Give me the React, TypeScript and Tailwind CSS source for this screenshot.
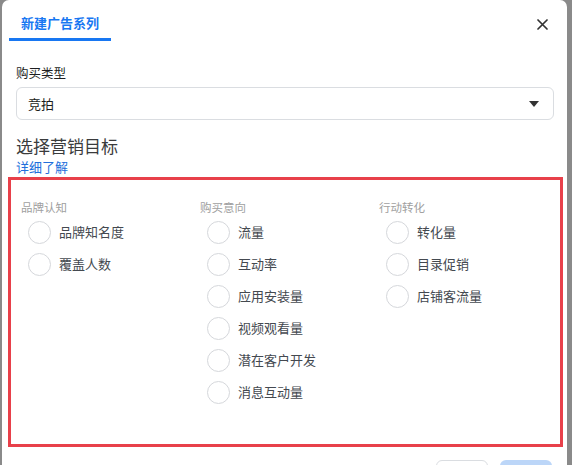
import React, { useState } from "react";

interface Group {
  title: string;
  options: string[];
}

const groups: Group[] = [
  { title: "品牌认知", options: ["品牌知名度", "覆盖人数"] },
  {
    title: "购买意向",
    options: ["流量", "互动率", "应用安装量", "视频观看量", "潜在客户开发", "消息互动量"],
  },
  { title: "行动转化", options: ["转化量", "目录促销", "店铺客流量"] },
];

export default function App() {
  const [picked, setPicked] = useState<string | null>(null);

  return (
    <div className="h-[465px] w-[572px] overflow-hidden bg-[#8a8a8a] pl-[2px] pr-[5px] font-['Noto_Sans_CJK_SC','Noto_Sans',sans-serif]">
      <div className="h-full rounded-t-[7px] bg-white">
        {/* 顶部标签 */}
        <div className="flex h-[41px] items-start justify-between">
          <div className="ml-[7px] flex h-full w-[102px] flex-col items-center">
            <div className="pt-[16px] text-[13px] leading-[13px] font-semibold text-[#1877f2]">
              新建广告系列
            </div>
            <div className="flex-1" />
            <div className="h-[3px] w-full bg-[#1877f2]" />
          </div>
          <button className="mr-[19px] mt-[19px] text-[#333]">
            <svg width="11" height="11" viewBox="0 0 11 11">
              <path
                d="M1 1 L10 10 M10 1 L1 10"
                stroke="currentColor"
                strokeWidth="1.7"
                strokeLinecap="round"
              />
            </svg>
          </button>
        </div>

        {/* 购买类型 */}
        <div className="px-[14px] pr-[13px]">
          <div className="mt-[25px] text-[12.5px] leading-[13px] text-[#1c1e21]">购买类型</div>
          <div className="mt-[8px] flex h-[33px] items-center justify-between rounded-[6px] border border-[#dadde1] pl-[11px] pr-[14px]">
            <span className="text-[13px] text-[#1c1e21]">竞拍</span>
            <svg width="10" height="6" viewBox="0 0 10 6">
              <path d="M0 0 L10 0 L5 6 Z" fill="#333" />
            </svg>
          </div>

          <div className="mt-[15px] text-[17px] leading-[21px] text-[#3a3b3c]">选择营销目标</div>
          <div className="mt-[3px] text-[13px] leading-[15px] text-[#216fdb]">详细了解</div>
        </div>

        {/* 营销目标 */}
        <div className="ml-[6px] mr-[4px] mt-[3px] h-[270px] border-[3px] border-[#e8404a] pl-[10px] pt-[20px]">
          <div className="flex">
            {groups.map((g) => (
              <div key={g.title} className="w-[179px]">
                <div className="text-[11.5px] leading-[14px] text-[#a0a0a0]">{g.title}</div>
                <div className="mt-[2px] pl-[7px]">
                  {g.options.map((o) => (
                    <label
                      key={o}
                      className="flex h-[32px] cursor-pointer items-center gap-[8px]"
                      onClick={() => setPicked(o)}
                    >
                      <span
                        className={`h-[23px] w-[23px] rounded-full border ${
                          picked === o ? "border-[6px] border-[#1877f2]" : "border-[#d5d7db]"
                        }`}
                      />
                      <span className="text-[13px] text-[#444950]">{o}</span>
                    </label>
                  ))}
                </div>
              </div>
            ))}
          </div>
        </div>

        {/* 底部按钮（只露出上沿） */}
        <div className="mt-[13px] flex justify-end gap-[12px] pr-[15px]">
          <button
            aria-label="取消"
            className="h-[36px] w-[52px] rounded-[6px] border border-[#dadde1] bg-white"
          />
          <button
            aria-label="继续"
            className="h-[36px] w-[52px] rounded-[6px] bg-[#bcd6f8]"
          />
        </div>
      </div>
    </div>
  );
}
